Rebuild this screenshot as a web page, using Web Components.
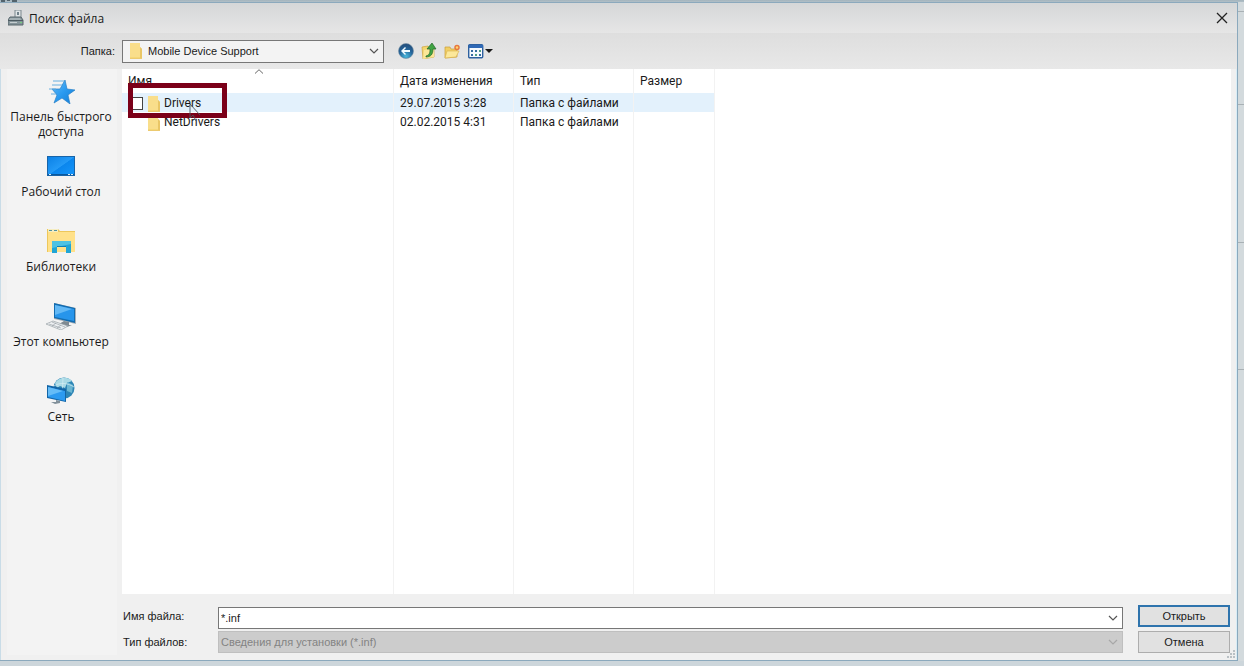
<!DOCTYPE html>
<html lang="ru">
<head>
<meta charset="utf-8">
<title>Поиск файла</title>
<style>
html,body{height:100%;margin:0}
body{background:#cdd6db;font:12px/15px "Open Sans","Noto Sans",sans-serif;color:#1a1a1a;overflow:hidden}
</style>
</head>
<body>
<app-desktop>
  <file-dialog heading="Поиск файла">
    <dialog-toolbar slot="toolbar"></dialog-toolbar>
    <places-bar slot="places">
      <place-item icon="star">Панель быстрого доступа</place-item>
      <place-item icon="desktop">Рабочий стол</place-item>
      <place-item icon="library">Библиотеки</place-item>
      <place-item icon="computer">Этот компьютер</place-item>
      <place-item icon="network">Сеть</place-item>
    </places-bar>
    <file-list slot="files"></file-list>
    <file-form slot="form"></file-form>
  </file-dialog>
</app-desktop>
<script>
const ICONS = {
  device: [16,16,'<path d="M7 0h6v8H7z" fill="#dfe4e6" stroke="#7b878d"/><path d="M9 2h2v3H9z" fill="#71828b"/><path d="M2 7h11l2 3v5H0v-5z" fill="#85949a" stroke="#58666d"/><path d="M2 8h10l1 2H1z" fill="#a4b0b4"/><path d="M0 10h15v1H0z" fill="#4c5a61"/><path d="M2 12h7v1H2z" fill="#c5cdd0"/><path d="M12 12h2v1h-2z" fill="#74d07c"/>'],
  close: [12,12,'<path d="M1 1l10 10M11 1L1 11" stroke="#222" stroke-width="1.3" fill="none"/>'],
  chevron: [10,6,'<path d="M1 1l4 4 4-4" fill="none" stroke="#555" stroke-width="1.2"/>'],
  caret: [10,5,'<path d="M1 4.500L5 .7l4 3.800" fill="none" stroke="#666"/>'],
  folder: [14,16,'<path d="M1 0h10v4l2 2v10H1z" fill="#f5d777"/><path d="M1 0h10v14H1z" fill="#f9de8b"/><path d="M11 4l2 2v10h-2z" fill="#e9c666"/><path d="M1 15h12v1H1z" fill="#ecca70"/>'],
  back: [16,16,'<defs><radialGradient id="b" cx=".5" cy=".85" r=".9"><stop offset="0" stop-color="#49b8dc"/><stop offset=".5" stop-color="#24659b"/><stop offset="1" stop-color="#234873"/></radialGradient></defs><circle cx="8" cy="8" r="7.500" fill="url(#b)" stroke="#7690a5" stroke-width=".6"/><path d="M3 8l4-4 1 1-2 2h6v2H6l2 2-1 1z" fill="#f3fbff"/>'],
  up: [16,16,'<path d="M1 4l6-1 1 2h5v9L2 16z" fill="#f4d66e" stroke="#cda43c" stroke-width=".7"/><path d="M3 7l10-2v9l-11 2z" fill="#fbe798"/><path d="M5 13c4-1 4-4 4-7H6l5-6 4 6h-3c0 5-2 8-7 8z" fill="#41a443" stroke="#23662b" stroke-width=".7"/>'],
  newfolder: [16,16,'<path d="M1 4h5l1 2h6v8L1 15z" fill="#f1cf65" stroke="#c99d3b" stroke-width=".7"/><path d="M3 8h12l-3 6-11 1z" fill="#fce89a" stroke="#d7ae4a" stroke-width=".6"/><circle cx="13" cy="4.500" r="2" fill="#ffd76f" stroke="#e8773f" stroke-width="1.500"/>'],
  views: [26,16,'<rect x="1.700" y="1.700" width="14" height="13" rx="1" fill="#f5fafe" stroke="#2d609f" stroke-width="1.400"/><path d="M2 2h14v3H2z" fill="#2f69b6"/><path d="M4 7h2v2H4zm4 0h2v2H8zM4 11h2v2H4zm8 0h2v2h-2z" fill="#366ba2"/><path d="M12 7h2v2h-2zM8 11h2v2H8z" fill="#53a181"/><path d="M18 6h8l-4 4z" fill="#181818"/>'],
  star: [28,26,'<defs><linearGradient id="s" x2="1" y2="1"><stop stop-color="#67bdf6"/><stop offset=".5" stop-color="#2a9af0"/><stop offset="1" stop-color="#147cd3"/></linearGradient></defs><g transform="translate(2 1)"><path d="M16 1l2 9 8 1-7 5 2 9-8-6-8 5 3-8-5-6h8z" fill="url(#s)" stroke="#2680c7" stroke-width=".7"/><path d="M4 2h11M3 6h10M0 10h7M2 15h5" stroke="#68afe0"/></g>'],
  desktop: [30,22,'<defs><linearGradient id="d" x2="1" y2="1"><stop stop-color="#0b80e5"/><stop offset=".5" stop-color="#239af7"/><stop offset=".52" stop-color="#0b86ed"/><stop offset="1" stop-color="#1596fb"/></linearGradient></defs><rect x="1.500" y="1.500" width="27" height="19" fill="url(#d)" stroke="#1764a9"/><path d="M2 19h26v1H2z" fill="#09589d"/><path d="M3 19h2v1H3zM22 19h2v1h-2zm3 0h2v1h-2z" fill="#d8edfb"/>'],
  library: [30,26,'<path d="M1 1h11l2 2h15v21H1z" fill="#edc75b"/><path d="M2 4h27v20H2z" fill="#ffe18a"/><path d="M2 1h10v3H2z" fill="#f5edc1"/><path d="M3 2h3v1H3zm5 0h3v1H8z" fill="#52919d"/><path d="M6 13h19v12h-5v-6h-9v6H6z" fill="#20a5d6"/><path d="M6 13h19v3l-19 4z" fill="#4cc2e3"/><path d="M11 18h9v1h-9z" fill="#0b80b9"/>'],
  computer: [32,28,'<path d="M9 1l22 5v16L9 17z" fill="#a7b0b7"/><path d="M9 1l21 5v15L9 16z" fill="#146caf"/><path d="M10 3l19 4v12L10 15z" fill="#2795eb"/><path d="M10 3l17 4-17 6z" fill="#62b8f5"/><path d="M19 19l5 1v3h3l-5 2-8-3z" fill="#7f8a92"/><path d="M1 22l7-3 15 5-7 4z" fill="#edf0f2" stroke="#9ba3a8" stroke-width=".7"/><path d="M4 22l12 4M7 20l13 5M7 24l4-3M12 26l4-3" stroke="#9299a0" stroke-width=".6"/>'],
  network: [30,28,'<circle cx="18" cy="11" r="10.500" fill="#2d85b5"/><path d="M9 6c5-7 13-6 17-2l-5 2-2 5-5-2-3 2z" fill="#a8d9e5"/><path d="M21 5l6 3-1 8-5-2z" fill="#6bb6d2"/><path d="M17 1l-1 20M8 9c6-4 14-3 20 1" stroke="#d5edf3" fill="none" stroke-width=".7"/><path d="M1 8l19 4v13L1 21z" fill="#1265a6"/><path d="M2 10l17 4v10L2 20z" fill="#2c9af0"/><path d="M2 10l15 4-15 5z" fill="#65bcf7"/><path d="M10 23l4 1v2l-5 1-4-2h5z" fill="#81909a"/>'],
  cursor: [14,20,'<path d="M1 15V1l10 11M1 15l3-3 3 6" fill="none" stroke="#4b555e" stroke-width=".9"/>'],
  grip: [10,10,'<path d="M7 1h2v2H7zM4 4h2v2H4zm3 0h2v2H7zM1 7h2v2H1zm3 0h2v2H4zm3 0h2v2H7z" fill="#b9c0c4"/>'],
  debris: [20,2,'<path d="M1 0h4v2H1zm6 0h3v1H7zm5 0h5v2h-5z" fill="#53636c"/>']
};
const icon = n => { const [w,h,s] = ICONS[n]; return `<svg class="i-${n}" width="${w}" height="${h}" viewBox="0 0 ${w} ${h}" aria-hidden="true">${s}</svg>`; };
const BASE = `:host,*{box-sizing:border-box}svg{display:block;flex:none}button,input,select{font:inherit;color:inherit;margin:0;border-radius:0}button{padding:0;background:none;border:0}`;
const define = (name, html) => customElements.define(name, class extends HTMLElement {
  constructor(){ super(); this.attachShadow({mode:'open'}).innerHTML = `<style>${BASE}${html(this).css}</style>${html(this).body}`; }
});

define('app-desktop', () => ({
  css:`:host{display:grid;grid-template-columns:minmax(0,1fr) 6px;height:100%;padding:2px 0 5px;background:linear-gradient(#a3b4bd,#cdd6db 6px);position:relative}
  .behind{display:grid;grid-template-rows:10px 93px 138px 127px 1fr;background:#d3dadd}.behind i{border-bottom:1px solid #a9b1b5}.behind i:last-child{border:0}
  .i-debris{position:absolute;left:0;top:0}`,
  body:`<slot></slot><div class="behind"><i></i><i></i><i></i><i></i><i></i></div>${icon('debris')}`
}));
define('file-dialog', el => ({
  css:`:host{display:grid;grid-template:30px 36px minmax(0,1fr) 66px / 122px minmax(0,1fr);border:solid #8ba9bd;border-width:1px 1px 1px 0;background:#f0f0f0;position:relative;min-width:0;min-height:0}
  header{grid-column:1/3;display:flex;align-items:center;gap:5px;padding:0 8px 0 8px;background:linear-gradient(#d5d7d8,#e6e6e6)}
  h1{font:inherit;margin:0;flex:1}header button{width:14px;height:20px;display:grid;place-items:center}
  .tools{grid-column:1/3;background:linear-gradient(#dedede,#e8e8e8)}
  .places{grid-row:3/5;padding:0 5px 5px 6px;border-left:1px solid #c9dce7}
  .files{padding-right:5px;min-height:0}.form{min-width:0}
  .files,.form{border-right:1px solid #d9edf6}
  .i-grip{position:absolute;right:1px;bottom:1px}`,
  body:`<header>${icon('device')}<h1>${el.getAttribute('heading')||'Поиск файла'}</h1><button aria-label="Закрыть">${icon('close')}</button></header>
  <div class="tools"><slot name="toolbar"></slot></div><div class="places"><slot name="places"></slot></div>
  <div class="files"><slot name="files"></slot></div><div class="form"><slot name="form"></slot></div>${icon('grip')}`
}));
define('dialog-toolbar', () => ({
  css:`:host{display:grid;grid-template-columns:115px 262px auto;column-gap:7px;align-items:center;height:36px;font:11px/15px "Liberation Sans",Arial,sans-serif}
  label{text-align:right}.combo{display:flex;align-items:center;position:relative;height:23px;background:#f3f3f3;border:1px solid #777;padding-left:6px}
  select{appearance:none;border:0;background:none;flex:1;height:21px;padding:0 20px 0 5px;outline:0}.i-chevron{position:absolute;right:4px}
  .tools{display:flex;gap:7px;padding-left:7px}`,
  body:`<label for="dir">Папка:</label><div class="combo">${icon('folder')}<select id="dir"><option>Mobile Device Support</option></select>${icon('chevron')}</div>
  <div class="tools"><button aria-label="Назад">${icon('back')}</button><button aria-label="Вверх">${icon('up')}</button><button aria-label="Новая папка">${icon('newfolder')}</button><button aria-label="Вид">${icon('views')}</button></div>`
}));
define('places-bar', () => ({
  css:`:host{display:flex;flex-direction:column;height:100%;background:#f3f3f3;padding:4px 2px 0 0}`,
  body:`<slot></slot>`
}));
customElements.define('place-item', class extends HTMLElement {
  constructor(){ super(); this.attachShadow({mode:'open'}); }
  connectedCallback(){ this.shadowRoot.innerHTML = `<style>${BASE}:host{display:block;height:75px}
    button{width:100%;display:flex;flex-direction:column;align-items:center}.pic{height:36px;display:grid;place-items:center}
    </style><button><span class="pic">${icon(this.getAttribute('icon'))}</span><span><slot></slot></span></button>`; }
});
define('file-list', () => ({
  css:`:host{display:block;height:100%;background:#fff;position:relative;font-family:Roboto,"Open Sans",sans-serif}
  table{width:100%;height:100%;border-collapse:separate;border-spacing:0;table-layout:fixed}
  th,td{font-weight:400;text-align:left;padding:0 6px;border-right:1px solid #f2f2f2;white-space:nowrap}th:last-child,td:last-child{border:0}
  th{height:24px;position:relative}.i-caret{position:absolute;left:132px;top:0}
  .row td{height:19px;padding-top:2px}.hot td:not(:last-child){background:#e3f1fc}
  .name{display:flex;align-items:center;gap:3px}.name i{width:16px}
  input{appearance:none;width:12px;height:13px;margin:0 1px 0 3px;border:1px solid #444;background:#fff}
  .mark{position:absolute;left:6px;top:14px;width:99px;height:35px;border:5px solid #7b0019}
  .i-cursor{position:absolute;left:67px;top:34px}`,
  body:`<table><colgroup><col style="width:272px"><col style="width:120px"><col style="width:120px"><col style="width:81px"><col></colgroup>
  <thead><tr><th>Имя${icon('caret')}</th><th>Дата изменения</th><th>Тип</th><th>Размер</th><th></th></tr></thead>
  <tbody><tr class="row hot"><td><div class="name"><input type="checkbox" aria-label="Drivers">${icon('folder')}<span>Drivers</span></div></td><td>29.07.2015 3:28</td><td>Папка с файлами</td><td></td><td></td></tr>
  <tr class="row"><td><div class="name"><i></i>${icon('folder')}<span>NetDrivers</span></div></td><td>02.02.2015 4:31</td><td>Папка с файлами</td><td></td><td></td></tr>
  <tr><td></td><td></td><td></td><td></td><td></td></tr></tbody></table><div class="mark"></div>${icon('cursor')}`
}));
define('file-form', () => ({
  css:`:host{display:grid;grid-template-columns:87px minmax(0,1fr) 92px;grid-template-rows:22px 22px;gap:4px 8px;padding:11px 6px 0 1px;font:11px/15px "Liberation Sans",Arial,sans-serif;align-items:center}
  .combo{position:relative;height:22px;margin-right:7px;display:flex;align-items:center;border:1px solid #777;background:#fff}
  .edit{margin-top:4px}
  input,select{appearance:none;width:100%;height:20px;border:0;background:none;padding:0 20px 0 2px;outline:0}
  .off{background:#ccc;border-color:#bfbfbf}select:disabled{color:#838383;opacity:1}.off svg{opacity:.3}
  .i-chevron{position:absolute;right:4px}button{height:22px;border:1px solid #adadad;background:#e1e1e1}.main{border:2px solid #2f74ad}`,
  body:`<label for="n">Имя файла:</label><div class="combo edit"><input id="n" value="*.inf">${icon('chevron')}</div><button class="main">Открыть</button>
  <label for="t">Тип файлов:</label><div class="combo off"><select id="t" disabled><option>Сведения для установки (*.inf)</option></select>${icon('chevron')}</div><button>Отмена</button>`
}));
</script>
</body>
</html>
